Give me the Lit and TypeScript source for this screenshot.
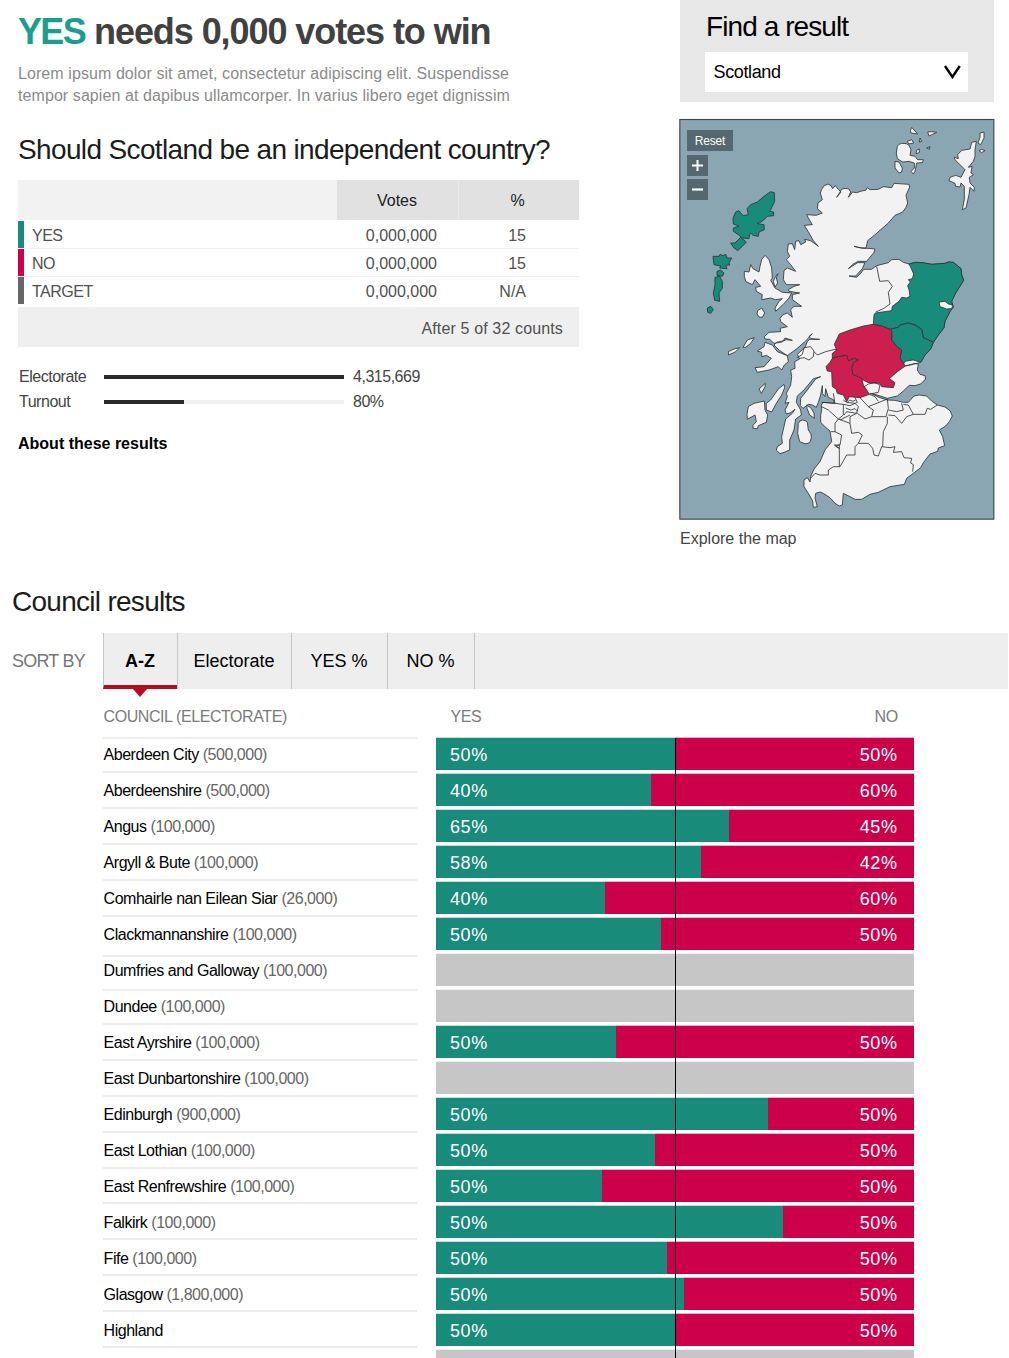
import { LitElement, html, svg, css } from "lit";
import { customElement, property } from "lit/decorators.js";

interface Council {
  name: string;
  electorate?: string;
  yes?: string;
  no?: string;
  /** width of the YES segment, out of BAR_UNITS */
  split?: number;
  /** how far the dividing rule sits above the bar's top edge */
  lift: number;
}

const BAR_UNITS = 478;

const councils: Council[] = [
  { name: "Aberdeen City", electorate: "500,000", yes: "50%", no: "50%", split: 240, lift: 1 },
  { name: "Aberdeenshire", electorate: "500,000", yes: "40%", no: "60%", split: 215, lift: 3 },
  { name: "Angus", electorate: "100,000", yes: "65%", no: "45%", split: 293, lift: 3 },
  { name: "Argyll & Bute", electorate: "100,000", yes: "58%", no: "42%", split: 265, lift: 3 },
  { name: "Comhairle nan Eilean Siar", electorate: "26,000", yes: "40%", no: "60%", split: 169, lift: 3 },
  { name: "Clackmannanshire", electorate: "100,000", yes: "50%", no: "50%", split: 225, lift: 3 },
  { name: "Dumfries and Galloway", electorate: "100,000", lift: -1 },
  { name: "Dundee", electorate: "100,000", lift: 1 },
  { name: "East Ayrshire", electorate: "100,000", yes: "50%", no: "50%", split: 180, lift: 3 },
  { name: "East Dunbartonshire", electorate: "100,000", lift: 3 },
  { name: "Edinburgh", electorate: "900,000", yes: "50%", no: "50%", split: 332, lift: 3 },
  { name: "East Lothian", electorate: "100,000", yes: "50%", no: "50%", split: 219, lift: 3 },
  { name: "East Renfrewshire", electorate: "100,000", yes: "50%", no: "50%", split: 166, lift: 3 },
  { name: "Falkirk", electorate: "100,000", yes: "50%", no: "50%", split: 347, lift: 4 },
  { name: "Fife", electorate: "100,000", yes: "50%", no: "50%", split: 231, lift: 4 },
  { name: "Glasgow", electorate: "1,800,000", yes: "50%", no: "50%", split: 248, lift: 4 },
  { name: "Highland", yes: "50%", no: "50%", split: 240, lift: 4 },
  { name: "", lift: 4 },
];

const mainland =
  "428,214 436,203 447,198 456,203 461,212 469,203 478,214 486,222 473,238 488,214 498,211 510,213 515,222 508,238 521,222 533,224 548,219 560,217 565,209 573,215 598,214 613,206 638,209 645,196 690,199 692,207 681,232 686,255 681,268 671,282 648,292 628,315 588,350 566,368 561,390 543,389 525,385 550,391 570,391 588,393 585,403 563,430 538,430 523,438 508,452 536,434 558,434 550,452 530,474 510,474 533,478 546,465 554,454 578,454 593,443 628,434 638,425 660,424 673,433 690,438 708,433 730,434 758,439 798,436 808,432 823,433 846,452 848,470 854,487 830,525 818,550 823,568 813,580 808,591 798,609 795,629 778,651 763,673 755,693 738,711 725,733 703,739 679,744 708,736 718,739 715,756 723,769 738,773 740,783 725,798 708,803 691,802 673,819 655,834 625,841 588,829 575,826 600,838 625,846 648,847 673,853 688,853 705,834 721,831 743,834 758,849 775,861 798,867 813,878 820,894 811,911 800,924 781,936 791,956 797,983 778,990 776,1000 753,1008 733,1034 725,1049 703,1066 683,1081 676,1099 633,1106 598,1123 573,1129 548,1144 528,1144 513,1136 493,1126 490,1161 481,1164 468,1156 453,1139 433,1126 423,1122 410,1126 408,1141 415,1166 403,1168 401,1149 391,1131 375,1106 375,1086 385,1079 393,1092 395,1076 405,1053 423,1031 438,996 458,971 453,939 438,926 425,913 425,891 428,876 427,861 433,853 466,856 463,845 448,838 440,812 438,836 430,826 430,803 425,831 418,853 412,868 400,861 388,859 372,871 364,863 365,841 385,816 410,783 425,776 403,782 375,816 355,834 352,853 365,876 367,891 350,903 345,936 332,966 332,996 315,1003 303,1007 292,996 295,986 310,976 308,956 316,921 320,903 340,886 348,874 335,884 322,888 318,876 330,853 318,856 325,836 322,826 335,801 338,776 335,756 348,751 347,731 362,723 355,709 378,688 385,671 392,664 422,664 396,662 390,655 400,647 380,669 355,691 325,713 300,696 285,681 292,673 315,668 322,665 340,667 318,660 310,672 285,676 272,664 258,663 256,656 270,643 305,641 303,631 325,626 305,611 303,601 312,590 325,585 340,598 337,585 335,575 345,565 368,565 340,545 340,530 362,525 330,520 328,515 345,505 362,500 322,500 313,485 315,458 325,450 350,460 335,440 322,425 332,415 325,400 328,378 340,377 347,395 350,370 360,368 365,380 380,372 377,364 395,368 418,385 403,368 390,345 376,322 400,320 388,300 383,290 412,292 430,285 415,272 417,255 430,245 424,225";

const whiteIslands = [
  "196,460 210,462 215,440 222,452 240,462 243,445 248,425 258,412 270,425 278,450 280,480 275,487 288,510 310,523 338,525 330,540 312,560 290,580 288,570 300,550 310,542 290,545 275,540 248,545 250,530 232,520 230,508 245,505 228,485 220,500 200,490 196,475",
  "297,467 292,480 296,495 288,507 283,490 290,475",
  "236,578 248,570 257,585 250,598 240,597 234,588",
  "258,673 280,681 295,701 325,713 328,731 316,741 308,756 298,746 270,756 235,763 228,749 255,746 277,721 262,712 248,716 248,703 235,699 255,686",
  "192,688 205,666 226,659 215,676 200,688",
  "148,701 165,693 182,689 170,701 149,711",
  "259,796 240,813 247,826 258,806",
  "315,799 298,813 275,846 262,856 262,876 278,882 292,856 308,831 317,809",
  "208,866 225,856 256,849 258,876 266,891 262,913 238,923 235,932 222,931 222,922 232,911 228,891 205,904 204,889",
  "383,861 397,871 405,886 406,901 392,891 384,871",
  "358,916 363,909 370,906 379,908 385,913 388,936 396,948 397,958 394,971 387,976 378,977 362,971 356,946",
  "655,85 660,79 668,76 682,77 690,82 696,95 693,112 708,115 716,125 733,125 730,134 713,135 708,160 703,168 696,160 706,150 706,135 690,130 671,132 655,122 652,105",
  "648,130 660,132 670,150 668,162 660,165 648,150",
  "698,28 716,48 696,45 694,38",
  "746,42 758,41 773,43 758,50 750,54",
  "685,70 698,65 704,75 690,78",
  "723,60 728,70 721,72",
  "743,90 753,86 751,94",
  "713,96 721,93 721,104 711,107",
  "903,45 915,42 915,60 905,80 897,75 903,58",
  "836,110 848,97 873,93 878,73 892,70 888,95 888,115 883,130 868,148 879,145 876,165 883,170 871,178 873,195 886,208 885,220 873,208 870,230 861,270 850,275 856,245 856,205 846,195 843,207 830,205 828,196 810,188 813,178 830,172 846,178 858,155 843,140 828,125 826,118 838,122",
  "900,98 908,94 918,98 908,104",
];

const greenIslands = [
  "275,221 286,224 287,250 280,265 272,280 284,282 284,293 265,295 250,310 235,317 255,320 256,335 240,342 238,355 222,352 215,345 212,350 210,362 190,360 178,350 163,340 163,330 180,325 163,318 162,300 170,282 180,278 192,293 208,290 204,272 215,260 235,252 255,235",
  "155,375 168,375 185,358 202,372 190,385 176,398 165,390",
  "102,415 120,415 123,409 132,413 140,409 145,420 158,420 150,435 152,441 140,442 144,452 122,450 125,444 105,440",
  "114,460 125,456 135,465 130,475 114,472",
  "108,478 122,475 130,490 130,510 120,525 122,550 107,547 103,525 108,500",
  "85,570 95,565 103,575 95,586 86,583",
];

const aberdeenshire =
  "690,438 708,433 730,434 758,439 798,436 808,432 823,433 846,452 848,470 854,487 830,525 818,550 823,568 813,580 808,591 798,609 795,629 778,651 763,673 748,666 733,659 728,634 708,621 688,615 663,621 658,628 633,634 608,624 583,619 585,591 589,585 638,578 640,565 660,550 668,538 683,540 693,535 690,515 686,503 694,492 688,485 700,482 704,468 696,450";
const angus =
  "633,634 658,628 663,621 688,615 708,621 728,634 733,659 748,666 763,673 755,693 738,711 725,733 703,726 681,729 673,738 663,721 668,696 653,686 638,666 638,640";
const perth =
  "583,619 608,624 633,634 638,640 638,666 653,686 668,696 663,721 679,744 655,761 638,776 630,781 648,794 643,809 608,806 603,796 568,794 548,784 521,769 518,751 523,734 538,726 526,721 508,729 503,712 478,716 460,721 460,706 473,696 466,679 481,648 513,636 553,624";
const stirling =
  "460,721 478,716 503,712 508,729 526,721 538,726 523,734 518,751 521,769 548,781 553,801 563,816 571,829 543,839 511,836 503,851 493,831 475,826 471,813 460,806 458,761 445,759 441,746 453,733";

const boundaries = [
  "593,445 602,490 628,488 640,505 628,523 633,558 613,572 590,582",
  "355,719 370,709 375,689 395,686 405,699 403,716 390,726 375,719 362,721",
  "405,701 415,711 440,701 468,694 473,696",
  "428,853 468,856 493,859 493,891 478,903 448,876 428,866",
  "463,826 468,856",
  "493,846 503,853 528,856 538,866 533,886 503,881 495,891",
  "493,859 513,863 535,853 528,839",
  "543,839 568,866 583,876 578,896 558,903 535,886",
  "568,866 625,843 628,871 621,896 578,896",
  "628,876 653,881 673,876 668,856",
  "628,891 648,893 668,916 683,896 703,889 688,861 673,859",
  "703,889 738,889 745,871 755,874 775,861",
  "478,903 513,916 518,946 538,943 550,951 538,976 528,986 528,1011 503,1011 483,1046 463,1046 448,1056 448,1071 423,1071 408,1066 395,1081",
  "478,903 468,916 468,941 456,941",
  "468,941 488,951 483,981 466,981 481,991 470,985 481,980 481,1046",
  "538,976 568,976 581,991 585,1011 598,1014 608,986 633,989 648,986 643,1003 668,1001 675,1019 698,1021 695,1035 703,1040 701,1061",
  "625,896 625,916 613,941 611,986",
  "533,886 513,896 513,916",
  "483,906 513,891",
  "568,829 598,823 603,801 588,794 568,798 556,806",
  "571,829 588,836 598,850",
  "505,853 512,846 522,850 530,846",
  "500,870 515,876 528,872 536,880",
];

@customElement("result-map")
class ResultMap extends LitElement {
  static styles = css`
    :host {
      display: block;
      position: relative;
      width: 316px;
      height: 402px;
    }
    .canvas { display: block; }
    .sea { fill: #8aa6b2; stroke: #40474b; stroke-width: 3.4; }
    .shape { stroke: #2f3336; stroke-width: 2.5; stroke-linejoin: round; }
    .land { fill: #f2f2f2; }
    .yes { fill: #188b7a; }
    .no { fill: #cc1f4f; }
    .line { fill: none; }
    .controls {
      position: absolute;
      left: 8px;
      top: 12px;
      display: flex;
      flex-direction: column;
      align-items: flex-start;
      gap: 3.5px;
    }
    .btn {
      display: flex;
      align-items: center;
      justify-content: center;
      width: 21px;
      height: 21px;
      padding: 0;
      border: 0;
      background: #56686f;
      color: #fff;
      font: 12px/21px "Liberation Sans", Arial, sans-serif;
      letter-spacing: -0.2px;
    }
    .reset { width: 46px; padding-top: 1px; }
  `;

  render() {
    const poly = (points: string, kind: string) =>
      svg`<polygon class="shape ${kind}" points=${points}></polygon>`;
    return html`
      <svg class="canvas" width="316" height="402" viewBox="0 0 948 1206">
        <rect class="sea" x="2.5" y="4.5" width="942" height="1199"></rect>
        ${poly(mainland, "land")}
        ${whiteIslands.map((p) => poly(p, "land"))}
        ${greenIslands.map((p) => poly(p, "yes"))}
        ${poly(aberdeenshire, "yes")} ${poly(angus, "yes")}
        ${poly(perth, "no")} ${poly(stirling, "no")}
        ${poly("780,552 798,550 808,558 818,560 821,566 816,572 803,573 783,566", "land")}
        ${boundaries.map((p) => svg`<polyline class="shape line" points=${p}></polyline>`)}
      </svg>
      <div class="controls">
        <button class="btn reset">Reset</button>
        <button class="btn" aria-label="Zoom in">
          <svg width="11" height="11" viewBox="0 0 11 11"><path d="M5.5 0v11M0 5.5h11" stroke="#fff" stroke-width="2"/></svg>
        </button>
        <button class="btn" aria-label="Zoom out">
          <svg width="11" height="11" viewBox="0 0 11 11"><path d="M0 5.5h11" stroke="#fff" stroke-width="2.2"/></svg>
        </button>
      </div>
    `;
  }
}

@customElement("council-row")
class CouncilRow extends LitElement {
  @property({ attribute: false }) council!: Council;

  static styles = css`
    :host {
      display: grid;
      grid-template-columns: 314px 478px;
      column-gap: 19px;
      height: 36px;
    }
    .label {
      box-sizing: border-box;
      height: 32px;
      margin-top: calc(var(--lift) * -1px);
      padding: calc(var(--lift) * 1px + 4px) 0 0 0.6px;
      border-top: 2px solid #ececec;
      line-height: 22px;
      letter-spacing: -0.48px;
      white-space: nowrap;
      color: #000;
    }
    .count { color: #666; }
    .bar {
      display: flex;
      height: 32px;
      font-size: 18px;
      line-height: 34px;
      letter-spacing: 0.6px;
      color: #fff;
    }
    .none { background: #c6c6c6; box-shadow: 0 -1px 0 #f0f0f0; }
    .yes, .no { box-sizing: border-box; }
    .yes { background: #188b7a; padding-left: 14px; box-shadow: 0 -1px 0 #bfdfd9; }
    .no { flex: 1; background: #cc0049; padding-right: 16.5px; text-align: right; box-shadow: 0 -1px 0 #ebb3c7; }
  `;

  render() {
    const c = this.council;
    return html`
      <div class="label" style="--lift:${c.lift}">
        ${c.name} ${c.electorate ? html`<span class="count">(${c.electorate})</span>` : ""}
      </div>
      ${c.split === undefined
        ? html`<div class="bar none"></div>`
        : html`<div class="bar">
            <div class="yes" style="width:${(c.split / BAR_UNITS) * 100}%">${c.yes}</div>
            <div class="no">${c.no}</div>
          </div>`}
    `;
  }
}

@customElement("app-root")
class AppRoot extends LitElement {
  static styles = css`
    :host {
      display: block;
      width: 1009px;
      height: 1358px;
      overflow: hidden;
      background: #fff;
      color: #444;
      font: 16px/22px "Liberation Sans", Arial, sans-serif;
    }
    h1, h2, p { margin: 0; font-weight: 400; }
    .top {
      display: flex;
      justify-content: space-between;
      box-sizing: border-box;
      height: 586px;
      padding: 0 14px 0 18px;
    }
    .summary { width: 561px; padding-top: 12px; }
    .title {
      font-size: 36px;
      line-height: 40px;
      font-weight: 700;
      letter-spacing: -1.07px;
      color: #414141;
      white-space: nowrap;
    }
    .title-yes { color: #1a9f8e; letter-spacing: -1.65px; }
    .intro { margin-top: 11px; letter-spacing: 0.08px; color: #8b8b8b; white-space: nowrap; }
    .heading {
      font-size: 28px;
      line-height: 32px;
      letter-spacing: -0.64px;
      color: #1c1c1c;
      white-space: nowrap;
    }
    .question { margin-top: 27px; }
    .votes { margin-top: 14px; }
    .vrow { display: grid; grid-template-columns: 319px 121px 121px; }
    .vhead {
      height: 40px;
      margin-bottom: 1px;
      line-height: 41px;
      text-align: center;
      color: #222;
      background: #f2f2f2;
    }
    .vh { height: 40px; background: #e1e1e1; text-indent: -1px; }
    .vh + .vh { border-left: 1px solid #eaeaea; text-indent: -3px; }
    .vbody { height: 28px; line-height: 29px; color: #505050; }
    .name { padding-left: 8px; letter-spacing: -0.5px; border-left: 6px solid; height: 27px; box-shadow: inset 0 0 0 #eee; }
    .name-yes { border-left-color: #188b7a; }
    .name-no { border-left-color: #cc0049; }
    .name-target { border-left-color: #666; }
    .name-text { color: #505050; }
    .num { text-align: right; padding-right: 21px; }
    .pct { padding-right: 53px; }
    .vbody { background: linear-gradient(#efefef, #efefef) 0 27px / 100% 2px no-repeat; }
    .last { background: none; }
    .vfoot {
      height: 40px;
      margin-top: 2px;
      padding-right: 16px;
      line-height: 43px;
      letter-spacing: 0.14px;
      text-align: right;
      color: #505050;
      background: #efefef;
    }
    .stats { margin-top: 17px; }
    .stat {
      display: grid;
      grid-template-columns: 85px 240px auto;
      align-items: center;
      height: 25px;
      line-height: 25px;
      letter-spacing: -0.48px;
      color: #444;
    }
    .stat-name { padding-left: 1px; }
    .meter { height: 4px; margin: 0 -0.5px 0 0.5px; background: #f1f1f1; }
    .fill { height: 4px; background: #2a2a2a; }
    .stat-value { padding-left: 10px; }
    .about { margin-top: 19px; font-weight: 700; color: #000; }
    .side { width: 316px; }
    .find {
      box-sizing: border-box;
      width: 314px;
      height: 102px;
      margin-left: 1px;
      padding: 11px 26px 0 25px;
      background: #e7e7e7;
    }
    .find-title { padding-left: 1px; letter-spacing: -0.92px; color: #000; }
    .select {
      display: flex;
      justify-content: space-between;
      align-items: center;
      height: 40px;
      margin-top: 9px;
      padding: 0 7px 0 8.5px;
      background: #fff;
      color: #000;
      font-size: 18px;
      line-height: 40px;
      letter-spacing: -0.37px;
    }
    .map { margin-top: 16px; }
    .explore { margin: 8px 0 0 1px; color: #444; }
    .council-title { padding-left: 12px; letter-spacing: -0.72px; }
    .sort { display: flex; height: 56px; margin-top: 15px; font-size: 18px; line-height: 56px; }
    .sort-label { width: 91px; padding-left: 12px; letter-spacing: -0.78px; color: #777; white-space: nowrap; }
    .tabs { display: flex; width: 905px; background: #eee; color: #000; }
    .tab { box-sizing: border-box; border-left: 1px solid #c6c6c6; text-align: center; position: relative; text-indent: -1px; }
    .t0 { width: 74px; font-weight: 700; border-bottom: 4px solid #b50d20; }
    .t0::after {
      content: "";
      position: absolute;
      left: 29px;
      top: 56px;
      border: solid transparent;
      border-width: 8px 7.5px 0;
      border-top-color: #b50d20;
    }
    .t1 { width: 114px; }
    .t2 { width: 96px; }
    .t3 { width: 87px; }
    .t4 { flex: 1; }
    .table-head {
      display: flex;
      height: 32px;
      padding: 17px 0 0 103.5px;
      letter-spacing: -0.42px;
      color: #7b7b7b;
    }
    .col-name { width: 347px; }
    .col-yes { width: 424px; }
    .rows { position: relative; padding-left: 103px; width: 811px; }
    .midline { position: absolute; left: 675px; top: 0; bottom: 0; width: 1px; background: #000; }
  `;

  render() {
    const vrow = (label: string, kind: string, pct: string) => html`
      <div class="vrow vbody ${kind === "target" ? "last" : ""}">
        <div class="name name-${kind}"><span class="name-text">${label}</span></div>
        <div class="num">0,000,000</div>
        <div class="num pct">${pct}</div>
      </div>
    `;
    return html`
      <section class="top">
        <div class="summary">
          <h1 class="title"><span class="title-yes">YES</span> needs 0,000 votes to win</h1>
          <p class="intro">
            Lorem ipsum dolor sit amet, consectetur adipiscing elit. Suspendisse<br />tempor sapien at
            dapibus ullamcorper. In varius libero eget dignissim
          </p>
          <h2 class="heading question">Should Scotland be an independent country?</h2>
          <div class="votes">
            <div class="vrow vhead">
              <div></div>
              <div class="vh">Votes</div>
              <div class="vh">%</div>
            </div>
            ${vrow("YES", "yes", "15")} ${vrow("NO", "no", "15")} ${vrow("TARGET", "target", "N/A")}
            <div class="vfoot">After 5 of 32 counts</div>
          </div>
          <div class="stats">
            <div class="stat">
              <span class="stat-name">Electorate</span>
              <div class="meter"><div class="fill" style="width:100%"></div></div>
              <span class="stat-value">4,315,669</span>
            </div>
            <div class="stat">
              <span class="stat-name">Turnout</span>
              <div class="meter"><div class="fill" style="width:33.5%"></div></div>
              <span class="stat-value">80%</span>
            </div>
          </div>
          <p class="about">About these results</p>
        </div>
        <div class="side">
          <div class="find">
            <h2 class="heading find-title">Find a result</h2>
            <div class="select">
              <span>Scotland</span>
              <svg width="17" height="14" viewBox="0 0 17 14">
                <path d="M1 1l7.4 11L15.8 1" fill="none" stroke="#000" stroke-width="2.4" />
              </svg>
            </div>
          </div>
          <result-map class="map"></result-map>
          <p class="explore">Explore the map</p>
        </div>
      </section>
      <h2 class="heading council-title">Council results</h2>
      <div class="sort">
        <div class="sort-label">SORT BY</div>
        <div class="tabs">
          <div class="tab t0">A-Z</div>
          <div class="tab t1">Electorate</div>
          <div class="tab t2">YES %</div>
          <div class="tab t3">NO %</div>
          <div class="tab t4"></div>
        </div>
      </div>
      <div class="table-head">
        <div class="col-name">COUNCIL (ELECTORATE)</div>
        <div class="col-yes">YES</div>
        <div>NO</div>
      </div>
      <div class="rows">
        ${councils.map((c) => html`<council-row .council=${c}></council-row>`)}
        <div class="midline"></div>
      </div>
    `;
  }
}
